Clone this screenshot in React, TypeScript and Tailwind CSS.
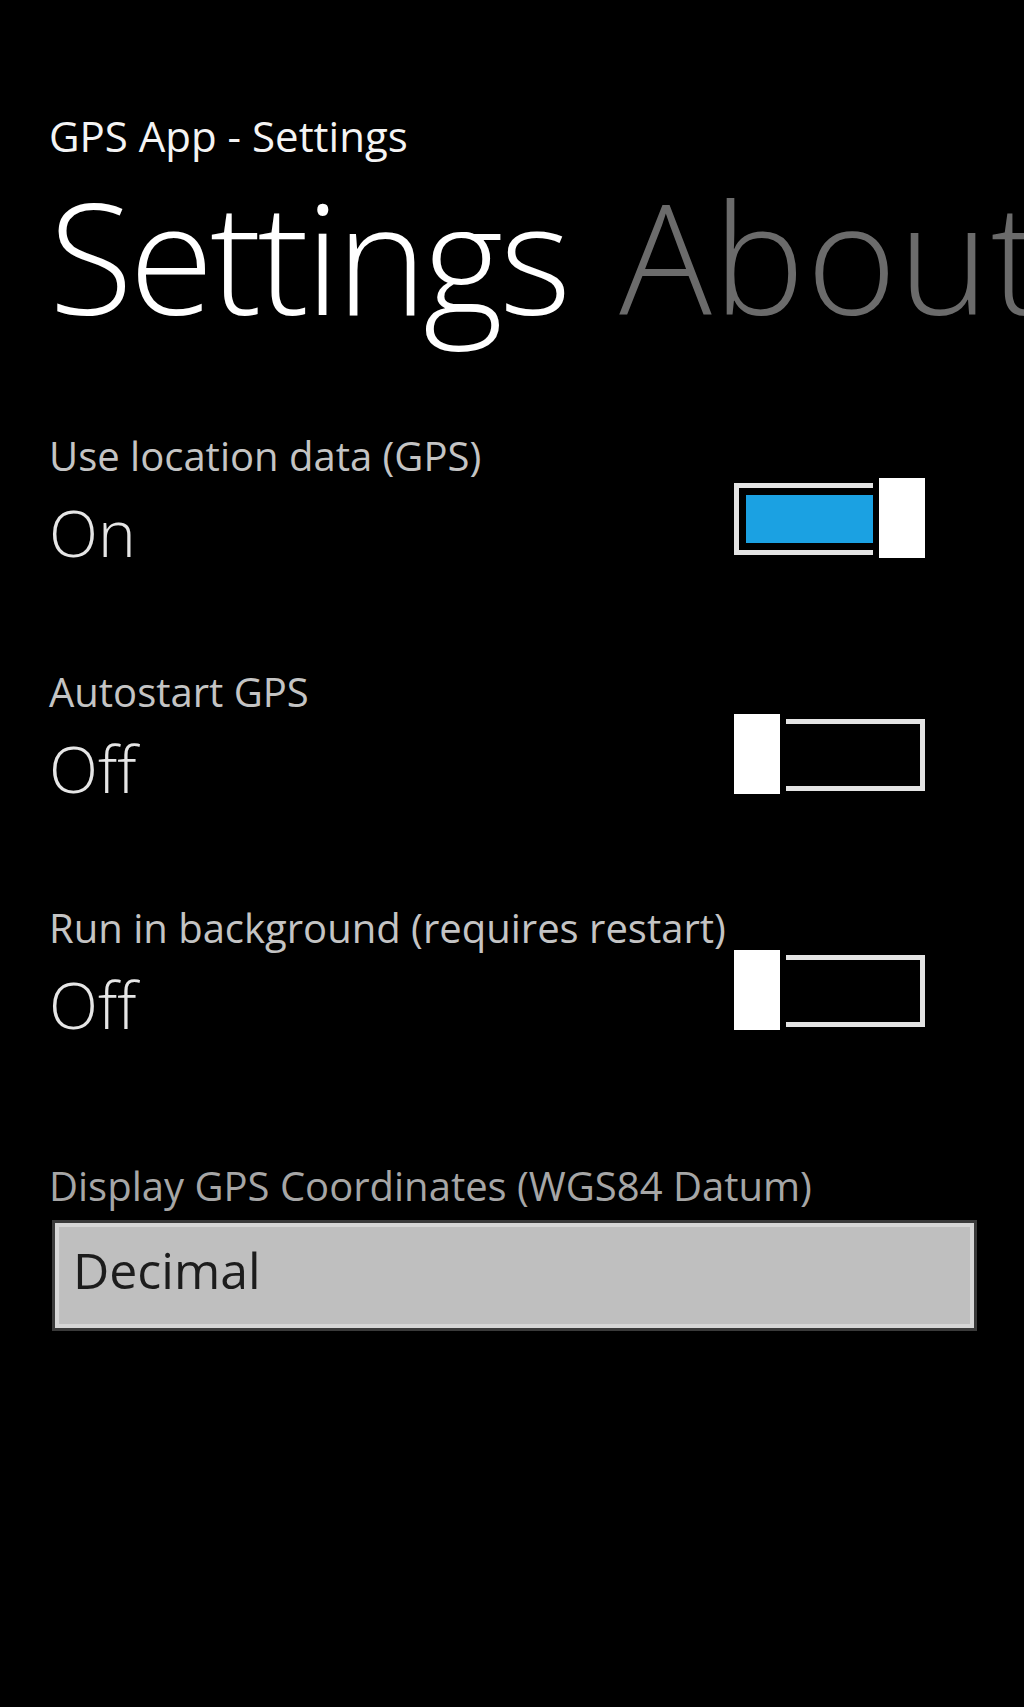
import React from 'react';

interface ToggleProps {
  on: boolean;
}

const Toggle = ({ on }: ToggleProps) => {
  return (
    <div className="relative w-[191px] h-[80px] mb-[11px] shrink-0">
      <div className="absolute left-0 right-0 top-[5px] bottom-[3px] border-[5px] border-[#e4e4e4] p-[7px]">
        {on && <div className="w-full h-full bg-[#1ba1e2]" />}
      </div>
      <div
        className={
          on
            ? 'absolute top-0 bottom-0 right-0 w-[46px] bg-white shadow-[0_0_0_6px_#000]'
            : 'absolute top-0 bottom-0 left-0 w-[46px] bg-white shadow-[0_0_0_6px_#000]'
        }
      />
    </div>
  );
};

interface RowProps {
  label: string;
  on: boolean;
}

const SettingRow = ({ label, on }: RowProps) => {
  return (
    <div className="flex items-end justify-between">
      <div className="flex flex-col">
        <div className="text-[40px] leading-[48px] text-[#c4c4c4] whitespace-nowrap">{label}</div>
        <div className="mt-[17px] text-[64px] leading-[72px] font-light text-[#e6e6e6]">{on ? 'On' : 'Off'}</div>
      </div>
      <Toggle on={on} />
    </div>
  );
};

export default function App() {
  return (
    <div className="w-[1024px] h-[1707px] overflow-hidden bg-black font-['Open_Sans',sans-serif] pl-[49px] pr-[99px] pt-[112px]">
      <div className="text-[42px] leading-[48px] text-[#f4f4f4] whitespace-nowrap">GPS App - Settings</div>
      <div className="mt-[15px] text-[154px] leading-[160px] font-light whitespace-nowrap">
        <span className="text-white tracking-[-0.025em]">Settings</span>
        <span className="ml-[52px] text-[#6b6b6b] tracking-[0.01em]">About</span>
      </div>

      <div className="mt-[97px] flex flex-col gap-[99px]">
        <SettingRow label="Use location data (GPS)" on={true} />
        <SettingRow label="Autostart GPS" on={false} />
        <SettingRow label="Run in background (requires restart)" on={false} />
      </div>

      <div className="mt-[121px] text-[40px] leading-[48px] text-[#a6a6a6] whitespace-nowrap">
        Display GPS Coordinates (WGS84 Datum)
      </div>
      <div className="mt-[10px] ml-[3px] w-[925px] h-[111px] border-[3px] border-[#3a3a3a]">
        <div className="h-full border-4 border-[#d6d6d6] bg-[#bfbfbf] pl-[14px] pt-[13px]">
          <div className="text-[50px] leading-[60px] text-[#1c1c1c]">Decimal</div>
        </div>
      </div>
    </div>
  );
}
